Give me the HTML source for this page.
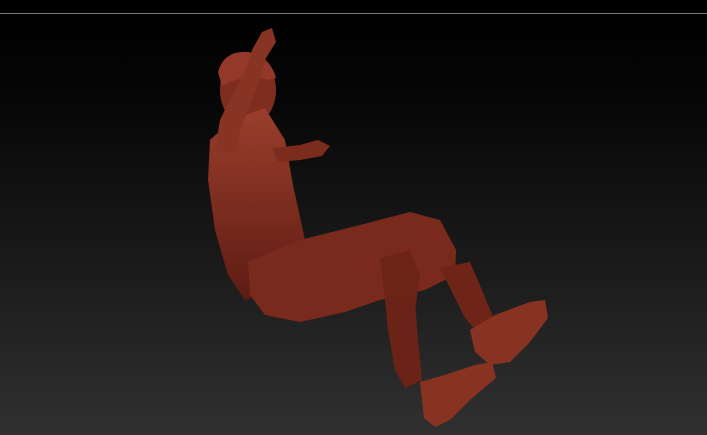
<!DOCTYPE html>
<html><head><meta charset="utf-8"><style>
html,body{margin:0;padding:0;width:707px;height:435px;overflow:hidden}
body{background:linear-gradient(#000 0%,#050505 20%,#1a1a1a 60%,#303030 100%)}
.line{position:absolute;left:0;top:13px;width:707px;height:1px;background:#7a7a7a}
svg{position:absolute;left:0;top:0}
</style></head><body>
<div class="line"></div>
<svg width="707" height="435" viewBox="0 0 707 435">
<defs>
<linearGradient id="g" x1="0" y1="0" x2="1" y2="1">
<stop offset="0" stop-color="#953a28"/><stop offset="0.5" stop-color="#782a1c"/><stop offset="1" stop-color="#4e1610"/>
</linearGradient>
<linearGradient id="g2" x1="0" y1="0" x2="0" y2="1">
<stop offset="0" stop-color="#9a3e2c"/><stop offset="1" stop-color="#5e1c13"/>
</linearGradient>
</defs>
<g fill="url(#g)">
<!-- head -->
<ellipse cx="248" cy="90" rx="28" ry="36" fill="#7e2d1f"/>
<path d="M218 72 Q224 50 248 52 Q270 56 276 78 L268 80 Q248 72 222 86 Z" fill="#94392a"/>
<!-- torso -->
<path d="M210 140 L232 120 L265 108 L285 140 L293 185 L305 240 L295 270 L275 290 L245 300 L228 275 L215 230 L208 180 Z" fill="url(#g2)"/>
<!-- raised arm (in front of head) -->
<path d="M215 150 L220 120 L232 95 L245 72 L252 50 L262 32 L272 28 L276 42 L266 58 L260 80 L250 105 L240 130 L235 155 Z" fill="#883424"/>
<!-- other arm -->
<path d="M272 148 L300 145 L318 140 L330 146 L322 156 L300 160 L278 162 Z" fill="#7c2c1d"/>
<!-- shorts -->
<path d="M248 262 L300 240 L360 225 L410 212 L440 220 L456 250 L455 275 L425 290 L380 300 L345 312 L300 322 L265 315 L250 295 Z" fill="#7a2a1c"/>
<path d="M380 258 L410 250 L420 275 L415 310 L400 318 L385 300 Z" fill="#6c2417"/>
<!-- lower leg front -->
<path d="M385 300 L415 300 L418 340 L422 380 L405 388 L395 370 L388 330 Z" fill="#6a2316"/>
<!-- lower leg back -->
<path d="M440 268 L470 262 L482 290 L495 322 L480 335 L465 318 Z" fill="#6e2518"/>
<!-- shoe back -->
<path d="M470 330 L495 315 L530 302 L545 300 L548 318 L530 342 L510 362 L490 365 L475 352 Z" fill="#883322"/>
<!-- shoe front -->
<path d="M420 382 L445 375 L475 365 L492 362 L496 378 L470 400 L450 420 L435 427 L424 418 Z" fill="#883322"/>
</g>
</svg>
</body></html>
